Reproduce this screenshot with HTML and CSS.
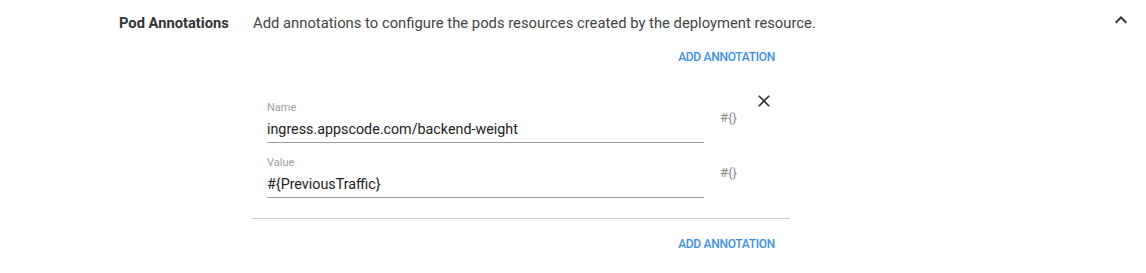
FILE: index.html
```html
<!DOCTYPE html>
<html>
<head>
<meta charset="utf-8">
<link rel="stylesheet" href="styles.css">
</head>
<body>
<section class="panel">
  <div class="header">
    <div class="title">Pod Annotations</div>
    <div class="desc">Add annotations to configure the pods resources created by the deployment resource.</div>
    <svg class="chevron" width="24" height="24" viewBox="0 0 24 24"><path d="M12 8l-6 6 1.41 1.41L12 10.83l4.59 4.58L18 14z" fill="#333"/></svg>
  </div>
  <div class="body">
    <div class="add-row"><span class="add-btn">ADD ANNOTATION</span></div>
    <div class="item">
      <div class="fields">
        <div class="field-row">
          <div class="field">
            <div class="label">Name</div>
            <div class="value">ingress.appscode.com/backend-weight</div>
          </div>
          <div class="expr">#{}</div>
        </div>
        <div class="field-row">
          <div class="field">
            <div class="label">Value</div>
            <div class="value">#{PreviousTraffic}</div>
          </div>
          <div class="expr">#{}</div>
        </div>
      </div>
      <svg class="close" width="20" height="20" viewBox="0 0 24 24"><path d="M19 6.41L17.59 5 12 10.59 6.41 5 5 6.41 10.59 12 5 17.59 6.41 19 12 13.41 17.59 19 19 17.59 13.41 12z" fill="#333"/></svg>
    </div>
    <div class="add-row bottom"><span class="add-btn">ADD ANNOTATION</span></div>
  </div>
</section>
</body>
</html>
```
FILE: styles.css
```css
html, body {
  margin: 0;
  padding: 0;
  background: #fff;
}
body {
  font-family: Roboto, "Liberation Sans", sans-serif;
  color: #333;
}
.header {
  display: flex;
  align-items: flex-start;
  padding: 13px 0 0 119px;
}
.title {
  width: 134px;
  font-size: 14.7px;
  line-height: 20px;
  font-weight: 700;
  color: #333;
}
.desc {
  flex: 1;
  font-size: 14.8px;
  line-height: 20px;
  color: #444;
}
.chevron {
  display: block;
  margin: -5px 13px 0 0;
}
.body {
  margin-left: 251px;
  width: 539px;
}
.add-row {
  display: flex;
  justify-content: flex-end;
  padding-right: 15px;
  margin-top: 17px;
}
.add-row.bottom {
  margin-top: 18px;
}
.add-btn {
  font-size: 12px;
  line-height: 14px;
  font-weight: 500;
  letter-spacing: -0.3px;
  color: #3d91e4;
}
.item {
  display: flex;
  align-items: flex-start;
  margin-top: 25px;
  padding: 0 0 20px 16px;
  border-bottom: 1px solid #cfcfcf;
}
.fields {
  display: flex;
  flex-direction: column;
  gap: 13px;
  margin-top: 12px;
}
.field-row {
  display: flex;
  align-items: flex-start;
}
.field {
  width: 437px;
  border-bottom: 1px solid #9e9e9e;
  padding-bottom: 3px;
}
.label {
  font-size: 11px;
  line-height: 13px;
  color: #9e9e9e;
}
.value {
  margin-top: 5px;
  font-size: 14.3px;
  line-height: 20px;
  color: #222;
}
.expr {
  margin: 10px 0 0 16px;
  width: 18px;
  font-size: 13px;
  line-height: 13px;
  color: #8a8a8a;
}
.close {
  display: block;
  margin: 2px 0 0 16px;
}
```
